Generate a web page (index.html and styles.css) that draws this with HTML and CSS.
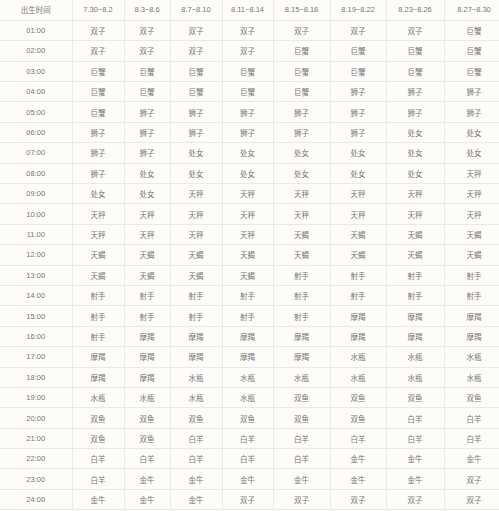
FILE: index.html
```html
<!DOCTYPE html>
<html lang="zh">
<head>
<meta charset="utf-8">
<link rel="stylesheet" href="styles.css">
</head>
<body>
<table class="tbl">
<colgroup>
<col class="c0"><col class="c1"><col class="c2"><col class="c3"><col class="c4"><col class="c5"><col class="c6"><col class="c7"><col class="c8">
</colgroup>
<tr class="head"><td>出生时间</td><td>7.30~8.2</td><td>8.3~8.6</td><td>8.7~8.10</td><td>8.11~8.14</td><td>8.15~8.18</td><td>8.19~8.22</td><td>8.23~8.26</td><td>8.27~8.30</td></tr>
<tr><td>01:00</td><td>双子</td><td>双子</td><td>双子</td><td>双子</td><td>双子</td><td>双子</td><td>双子</td><td>巨蟹</td></tr>
<tr><td>02:00</td><td>双子</td><td>双子</td><td>双子</td><td>双子</td><td>巨蟹</td><td>巨蟹</td><td>巨蟹</td><td>巨蟹</td></tr>
<tr><td>03:00</td><td>巨蟹</td><td>巨蟹</td><td>巨蟹</td><td>巨蟹</td><td>巨蟹</td><td>巨蟹</td><td>巨蟹</td><td>巨蟹</td></tr>
<tr><td>04:00</td><td>巨蟹</td><td>巨蟹</td><td>巨蟹</td><td>巨蟹</td><td>巨蟹</td><td>狮子</td><td>狮子</td><td>狮子</td></tr>
<tr><td>05:00</td><td>巨蟹</td><td>狮子</td><td>狮子</td><td>狮子</td><td>狮子</td><td>狮子</td><td>狮子</td><td>狮子</td></tr>
<tr><td>06:00</td><td>狮子</td><td>狮子</td><td>狮子</td><td>狮子</td><td>狮子</td><td>狮子</td><td>处女</td><td>处女</td></tr>
<tr><td>07:00</td><td>狮子</td><td>狮子</td><td>处女</td><td>处女</td><td>处女</td><td>处女</td><td>处女</td><td>处女</td></tr>
<tr><td>08:00</td><td>狮子</td><td>处女</td><td>处女</td><td>处女</td><td>处女</td><td>处女</td><td>处女</td><td>天秤</td></tr>
<tr><td>09:00</td><td>处女</td><td>处女</td><td>天秤</td><td>天秤</td><td>天秤</td><td>天秤</td><td>天秤</td><td>天秤</td></tr>
<tr><td>10:00</td><td>天秤</td><td>天秤</td><td>天秤</td><td>天秤</td><td>天秤</td><td>天秤</td><td>天秤</td><td>天秤</td></tr>
<tr><td>11:00</td><td>天秤</td><td>天秤</td><td>天秤</td><td>天秤</td><td>天蝎</td><td>天蝎</td><td>天蝎</td><td>天蝎</td></tr>
<tr><td>12:00</td><td>天蝎</td><td>天蝎</td><td>天蝎</td><td>天蝎</td><td>天蝎</td><td>天蝎</td><td>天蝎</td><td>天蝎</td></tr>
<tr><td>13:00</td><td>天蝎</td><td>天蝎</td><td>天蝎</td><td>天蝎</td><td>射手</td><td>射手</td><td>射手</td><td>射手</td></tr>
<tr><td>14:00</td><td>射手</td><td>射手</td><td>射手</td><td>射手</td><td>射手</td><td>射手</td><td>射手</td><td>射手</td></tr>
<tr><td>15:00</td><td>射手</td><td>射手</td><td>射手</td><td>射手</td><td>射手</td><td>摩羯</td><td>摩羯</td><td>摩羯</td></tr>
<tr><td>16:00</td><td>射手</td><td>摩羯</td><td>摩羯</td><td>摩羯</td><td>摩羯</td><td>摩羯</td><td>摩羯</td><td>摩羯</td></tr>
<tr><td>17:00</td><td>摩羯</td><td>摩羯</td><td>摩羯</td><td>摩羯</td><td>摩羯</td><td>水瓶</td><td>水瓶</td><td>水瓶</td></tr>
<tr><td>18:00</td><td>摩羯</td><td>摩羯</td><td>水瓶</td><td>水瓶</td><td>水瓶</td><td>水瓶</td><td>水瓶</td><td>水瓶</td></tr>
<tr><td>19:00</td><td>水瓶</td><td>水瓶</td><td>水瓶</td><td>水瓶</td><td>双鱼</td><td>双鱼</td><td>双鱼</td><td>双鱼</td></tr>
<tr><td>20:00</td><td>双鱼</td><td>双鱼</td><td>双鱼</td><td>双鱼</td><td>双鱼</td><td>双鱼</td><td>白羊</td><td>白羊</td></tr>
<tr><td>21:00</td><td>双鱼</td><td>双鱼</td><td>白羊</td><td>白羊</td><td>白羊</td><td>白羊</td><td>白羊</td><td>白羊</td></tr>
<tr><td>22:00</td><td>白羊</td><td>白羊</td><td>白羊</td><td>白羊</td><td>白羊</td><td>金牛</td><td>金牛</td><td>金牛</td></tr>
<tr><td>23:00</td><td>白羊</td><td>金牛</td><td>金牛</td><td>金牛</td><td>金牛</td><td>金牛</td><td>金牛</td><td>双子</td></tr>
<tr><td>24:00</td><td>金牛</td><td>金牛</td><td>金牛</td><td>双子</td><td>双子</td><td>双子</td><td>双子</td><td>双子</td></tr>
</table>
</body>
</html>
```
FILE: styles.css
```css
html, body {
  margin: 0;
  padding: 0;
  overflow: hidden;
  background: #fdfcf9;
}
.tbl {
  border-collapse: collapse;
  table-layout: fixed;
  width: 504px;
  font-family: "Liberation Sans", "Noto Sans CJK SC", sans-serif;
  font-size: 7.5px;
  color: #777;
}
.c0 { width: 72px; }
.c1 { width: 52px; }
.c2 { width: 46px; }
.c3 { width: 52px; }
.c4 { width: 51px; }
.c5 { width: 57px; }
.c6 { width: 56px; }
.c7 { width: 58px; }
.c8 { width: 60px; }
.tbl tr { height: 20.4px; }
.tbl td {
  padding: 0;
  text-align: center;
  vertical-align: middle;
  border: 1px solid #ebe9e4;
  border-top: none;
  white-space: nowrap;
  overflow: hidden;
}
.tbl td:first-child { border-left: none; }
```
